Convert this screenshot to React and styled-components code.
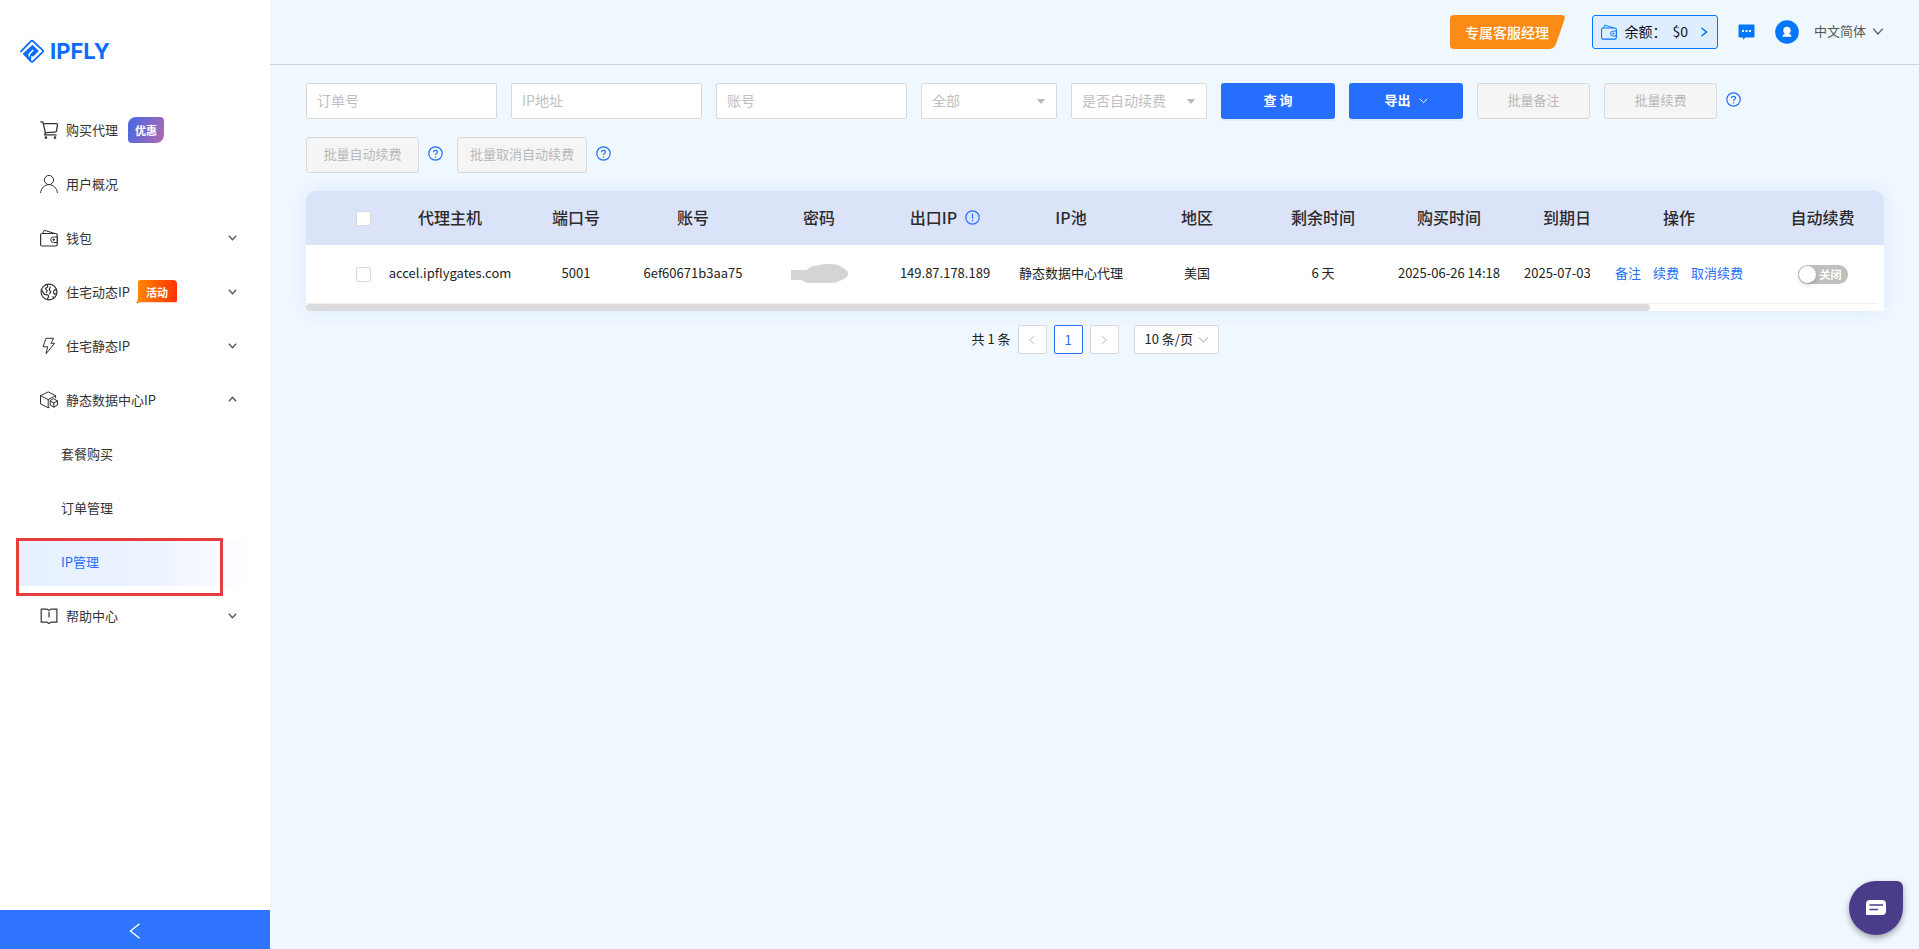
import React, { useLayoutEffect, useRef, useState } from "react";
import styled, { createGlobalStyle, css } from "styled-components";

const BLUE = "#266eff";

const COLUMNS = [
  { title: "代理主机", width: 144, value: "accel.ipflygates.com" },
  { title: "端口号", width: 108, value: "5001" },
  { title: "账号", width: 126, value: "6ef60671b3aa75" },
  { title: "密码", width: 126, value: <MaskedPassword /> },
  { title: "出口IP", width: 126, value: "149.87.178.189", hint: true },
  { title: "IP池", width: 126, value: "静态数据中心代理" },
  { title: "地区", width: 126, value: "美国" },
  { title: "剩余时间", width: 126, value: "6 天" },
  { title: "购买时间", width: 126, value: "2025-06-26 14:18" },
  { title: "到期日期", width: 126, value: "2025-07-03", align: "left" },
];

const MENU = [
  { label: "购买代理", icon: <CartIcon />, badge: "sale" },
  { label: "用户概况", icon: <UserIcon /> },
  { label: "钱包", icon: <WalletIcon />, arrow: "down" },
  { label: "住宅动态IP", icon: <GlobeIcon />, badge: "event", arrow: "down" },
  { label: "住宅静态IP", icon: <BoltIcon />, arrow: "down" },
  { label: "静态数据中心IP", icon: <BoxIcon />, arrow: "up" },
  { label: "套餐购买", sub: true },
  { label: "订单管理", sub: true },
  { label: "IP管理", sub: true, active: true },
  { label: "帮助中心", icon: <BookIcon />, arrow: "down" },
];

const BADGES = { sale: "优惠", event: "活动" };

function LineIcon({ size = 18, children, ...rest }) {
  return (
    <svg
      width={size}
      height={size}
      viewBox="0 0 18 18"
      fill="none"
      stroke="currentColor"
      strokeLinecap="round"
      strokeLinejoin="round"
      aria-hidden="true"
      {...rest}
    >
      {children}
    </svg>
  );
}

function CartIcon() {
  return (
    <LineIcon strokeWidth="1.3">
      <path d="M.8.9h2.1l2.5 10.800 9.600-.6q1.300-.1 1.500-1.200l1-6q.2-1.300-1.100-1.300H4.500" />
      <path d="M5.400 11.700l-.8 2.200h11.500" />
      <circle cx="5.900" cy="16.600" r=".7" fill="currentColor" />
      <circle cx="15" cy="16.600" r=".7" fill="currentColor" />
    </LineIcon>
  );
}

function UserIcon() {
  return (
    <LineIcon>
      <circle cx="9" cy="5" r="4.600" />
      <path d="M.6 17.600C1 13.200 4.600 9.600 9 9.600s8 3.600 8.400 8" />
    </LineIcon>
  );
}

function WalletIcon({ size }) {
  return (
    <LineIcon size={size}>
      <rect x=".6" y="4.500" width="16.600" height="12.500" rx="1.500" strokeWidth="1.200" />
      <path d="M2.800 4.300L4.200 1.300 14 4.200" />
      <path d="M17.200 8h-3.800a2.700 2.700 0 000 5.400h3.800z" />
      <circle cx="13.600" cy="10.700" r=".7" fill="currentColor" />
    </LineIcon>
  );
}

function GlobeIcon() {
  return (
    <LineIcon strokeWidth="1.200">
      <circle cx="9" cy="9" r="7.900" />
      <path d="M7.300 1.500l.5 2.300-2.400 1.700 1.800 2.300-.8 1.600M1.400 6.800l3 4.600 3.500.4.800 1.400-1.400 3.300M10.300 4l-1.100 2.600 1.600 2.200-1.200 2" />
      <path d="M16.500 6.600l-2.300.6-.9 2.100 1.500 2 1.900-.9M14.500 14.500l-1.800-.7" />
    </LineIcon>
  );
}

function BoltIcon() {
  return (
    <LineIcon>
      <path d="M6.400 1.300h7.200l-2.700 5h3.700L6 16.800l1.700-7H3.500z" />
    </LineIcon>
  );
}

function BoxIcon() {
  return (
    <LineIcon>
      <path d="M9.300 16.200l-1.100.5-7.700-3.800V4.700L8.200.9l7.400 3.800v2.200M.5 4.700l7.700 3.900 7.400-3.900M8.200 8.600v8.100" />
      <path d="M13.800 7.900l3.700 2v4.200l-3.700 2-3.600-2V9.900zM10.200 9.900l3.600 2 3.700-2M13.800 11.900v4.200" />
    </LineIcon>
  );
}

function BookIcon() {
  return (
    <LineIcon strokeWidth="1.200">
      <path d="M1.200 2.200H7L9 3.300l2-1.100h5.900v13H11l-2 1.200-2-1.200H1.200zM9 5v5" />
    </LineIcon>
  );
}

function Chevron({ dir = "down", size = 10, weight = 1 }) {
  const paths = {
    down: "M1 3l4 4.500L9 3",
    up: "M1 7l4-4.500L9 7",
    left: "M7.500 1L2.500 5l5 4",
    right: "M2.500 1l5 4-5 4",
  };
  return (
    <svg
      width={size}
      height={size}
      viewBox="0 0 10 10"
      fill="none"
      stroke="currentColor"
      strokeWidth={weight}
      aria-hidden="true"
    >
      <path d={paths[dir]} />
    </svg>
  );
}

function HintIcon({ type = "question" }) {
  return (
    <svg width="15" height="15" viewBox="0 0 15 15" fill="none" stroke={BLUE} aria-hidden="true">
      <circle cx="7.500" cy="7.500" r="6.700" strokeWidth="1.200" />
      {type === "question" ? (
        <path d="M5.500 6.200c0-1.200.9-1.900 2-1.900s2 .7 2 1.800c0 1.300-2 1.500-2 2.900M7.500 10.200v1.200" strokeWidth="1.200" />
      ) : (
        <path d="M7.500 3.800v5M7.500 10v1.200" strokeWidth="1.200" />
      )}
    </svg>
  );
}

function MaskedPassword() {
  return (
    <svg width="57" height="19" viewBox="0 0 57 19" role="img" aria-label="密码">
      <path
        d="M0 6h14c3 0 4-3 8-4 3-.2 5-.5 8-1.500 3-.7 9-.7 15 0 4 .8 7 3.500 9.500 5 3 2 3.300 5.500 1 7.500-3 2.500-7 4-11 5.500-4 .7-22 .8-28 .3-3-.5-4.500-2.800-8-2.800H0z"
        fill="#d4d4d4"
      />
    </svg>
  );
}

function Logo() {
  return (
    <LogoLink href="#">
      <svg width="24" height="24" viewBox="0 0 24 24" fill="none" aria-hidden="true">
        <path
          d="M1 12.400L11 2.200q1-1 2 0l9.600 8.900q1 1 0 2L13 22.400q-1 1-2 0L4 15"
          stroke="#0b6cff"
          strokeWidth="1.800"
          strokeLinecap="round"
        />
        <path d="M3 14.500l9.500-8.800 6.300 6.300-5.800 5.800-1.600-1-.4 5.200z" fill="#0b6cff" />
        <path d="M9.200 17.500v-2.200l4-4.300" stroke="#fff" strokeWidth="1.500" />
      </svg>
      IPFLY
    </LogoLink>
  );
}

function Sidebar() {
  return (
    <Aside>
      <Logo />
      <Menu>
        {MENU.map((item) => (
          <MenuLink href="#" key={item.label} $sub={item.sub} $active={item.active}>
            {item.icon}
            <span>{item.label}</span>
            {item.badge && <Badge $kind={item.badge}>{BADGES[item.badge]}</Badge>}
            {item.arrow && (
              <MenuArrow>
                <Chevron dir={item.arrow} size={9} weight={1.5} />
              </MenuArrow>
            )}
          </MenuLink>
        ))}
      </Menu>
      <Collapse type="button" aria-label="收起">
        <Chevron dir="left" size={18} weight={0.8} />
      </Collapse>
    </Aside>
  );
}

function Header() {
  return (
    <TopBar>
      <ManagerButton type="button">
        <svg viewBox="0 0 115 34" preserveAspectRatio="none" aria-hidden="true">
          <path d="M4 0h107q5 0 3.500 4.500L106 29q-2 5-7 5H4q-4 0-4-4V4q0-4 4-4z" fill="#fc8b16" />
        </svg>
        <span>专属客服经理</span>
      </ManagerButton>
      <Balance type="button">
        <WalletIcon size={16} />
        <span>余额：</span>
        <span>$0</span>
        <Chevron dir="right" size={10} weight={1.6} />
      </Balance>
      <IconButton type="button" aria-label="消息">
        <svg width="17" height="16" viewBox="0 0 16 16" aria-hidden="true">
          <path d="M1 .5h14a1 1 0 011 1v11a1 1 0 01-1 1H7L4.500 15.800V13.500H1a1 1 0 01-1-1v-11a1 1 0 011-1z" fill="#0077ff" />
          <path d="M3.500 6h2v2h-2zM7 6h2v2H7zM10.500 6h2v2h-2z" fill="#fff" />
        </svg>
      </IconButton>
      <IconButton type="button" aria-label="用户">
        <svg width="24" height="24" viewBox="0 0 24 24" aria-hidden="true">
          <circle cx="12" cy="12" r="11.800" fill="#0077ff" />
          <circle cx="12" cy="10.500" r="3.700" fill="#fff" />
          <path d="M7.500 16.800c0-2.300 2-3.300 4.500-3.300s4.500 1 4.500 3.300z" fill="#fff" />
        </svg>
      </IconButton>
      <Language type="button">
        中文简体
        <Chevron size={12} />
      </Language>
    </TopBar>
  );
}

function Filters() {
  return (
    <FilterBar>
      <TextField aria-label="订单号" placeholder="订单号" />
      <TextField aria-label="IP地址" placeholder="IP地址" />
      <TextField aria-label="账号" placeholder="账号" />
      <FilterSelect label="全部" />
      <FilterSelect label="是否自动续费" />
      <PrimaryButton type="button">查 询</PrimaryButton>
      <PrimaryButton type="button">
        导出
        <Chevron size={9} />
      </PrimaryButton>
      <BatchButton type="button" disabled>批量备注</BatchButton>
      <BatchGroup>
        <BatchButton type="button" disabled>批量续费</BatchButton>
        <HintIcon />
      </BatchGroup>
      <BatchGroup>
        <BatchButton type="button" disabled>批量自动续费</BatchButton>
        <HintIcon />
      </BatchGroup>
      <BatchGroup>
        <BatchButton type="button" disabled>批量取消自动续费</BatchButton>
        <HintIcon />
      </BatchGroup>
    </FilterBar>
  );
}

function FilterSelect({ label }) {
  return (
    <SelectWrap>
      <select aria-label={label} defaultValue="">
        <option value="">{label}</option>
      </select>
      <svg width="8" height="5" viewBox="0 0 8 5" aria-hidden="true">
        <path d="M0 0h8L4 5z" fill="#b8b8b8" />
      </svg>
    </SelectWrap>
  );
}

function ProxyTable() {
  const scroller = useRef(null);
  const [thumb, setThumb] = useState({ width: 100, left: 0 });

  const measure = () => {
    const { clientWidth, scrollWidth, scrollLeft } = scroller.current;
    setThumb({ width: (clientWidth / scrollWidth) * 100, left: (scrollLeft / scrollWidth) * 100 });
  };

  useLayoutEffect(() => {
    measure();
    window.addEventListener("resize", measure);
    return () => window.removeEventListener("resize", measure);
  }, []);

  return (
    <TableCard>
      <Scroller ref={scroller} onScroll={measure}>
        <Table>
          <colgroup>
            <Col $width={72} />
            {COLUMNS.map((c) => (
              <Col key={c.title} $width={c.width} />
            ))}
            <col />
            <Col $width={178} />
            <Col $width={109} />
            <Col $width={7} />
          </colgroup>
          <thead>
            <tr>
              <CheckHead>
                <Checkbox type="checkbox" aria-label="全选" />
              </CheckHead>
              {COLUMNS.map((c) => (
                <HeadCell key={c.title}>
                  <HeadLabel>
                    {c.title}
                    {c.hint && <HintIcon type="info" />}
                  </HeadLabel>
                </HeadCell>
              ))}
              <HeadCell />
              <HeadCell $right={116}>操作</HeadCell>
              <HeadCell $right={7}>自动续费</HeadCell>
              <HeadCell $right={0} />
            </tr>
          </thead>
          <tbody>
            <tr>
              <CheckCell>
                <Checkbox type="checkbox" aria-label="选择" />
              </CheckCell>
              {COLUMNS.map((c) => (
                <Cell key={c.title} $align={c.align}>{c.value}</Cell>
              ))}
              <Cell />
              <Cell $right={116}>
                <Actions>
                  <a href="#">备注</a>
                  <a href="#">续费</a>
                  <a href="#">取消续费</a>
                </Actions>
              </Cell>
              <Cell $right={7}>
                <Switch type="button" role="switch" aria-checked="false">
                  <i />
                  关闭
                </Switch>
              </Cell>
              <Gutter />
            </tr>
          </tbody>
        </Table>
      </Scroller>
      <Track>
        <Thumb style={{ width: `${thumb.width}%`, marginLeft: `${thumb.left}%` }} />
      </Track>
    </TableCard>
  );
}

function Pagination() {
  return (
    <Pager>
      <span>共 1 条</span>
      <PageButton type="button" disabled aria-label="上一页">
        <Chevron dir="left" size={10} />
      </PageButton>
      <PageButton type="button" $current>1</PageButton>
      <PageButton type="button" disabled aria-label="下一页">
        <Chevron dir="right" size={10} />
      </PageButton>
      <PageSize>
        <select aria-label="每页条数" defaultValue="10">
          <option value="10">10 条/页</option>
        </select>
        <Chevron size={11} />
      </PageSize>
    </Pager>
  );
}

export default function App() {
  return (
    <>
      <GlobalStyle />
      <Layout>
        <Sidebar />
        <Main>
          <Header />
          <Content>
            <Filters />
            <ProxyTable />
            <Pagination />
          </Content>
        </Main>
        <ChatButton type="button" aria-label="在线客服">
          <svg width="20" height="16" viewBox="0 0 20 16" aria-hidden="true">
            <path d="M4 0h12a4 4 0 014 4v7a4 4 0 01-4 4H0V4a4 4 0 014-4z" fill="#fff" />
            <path d="M3.500 5h13.500M3.500 9.500h8.500" stroke="#4a3c89" strokeWidth="1.500" />
          </svg>
        </ChatButton>
      </Layout>
    </>
  );
}

const GlobalStyle = createGlobalStyle`
  *, *::before, *::after {
    box-sizing: border-box;
  }

  body {
    margin: 0;
    background: #f0f8ff;
    color: #222;
    font-family: "Noto Sans CJK SC", sans-serif;
    font-size: 13px;
    line-height: 20px;
  }

  button, input, select {
    font: inherit;
  }

  button {
    padding: 0;
    border: 0;
    background: none;
    cursor: pointer;
  }

  a {
    color: inherit;
    text-decoration: none;
  }

  svg {
    flex-shrink: 0;
  }
`;

const Layout = styled.div`
  display: flex;
  min-height: 100vh;
`;

const Aside = styled.aside`
  position: sticky;
  top: 0;
  display: flex;
  flex-direction: column;
  flex: 0 0 270px;
  height: 100vh;
  background: #fff;
`;

const LogoLink = styled.a`
  display: flex;
  align-items: center;
  gap: 6px;
  padding: 35px 20px 0;
  color: #0b6cff;
  font-family: Inter, sans-serif;
  font-size: 22px;
  font-weight: 700;
  line-height: 32px;
`;

const Menu = styled.nav`
  display: flex;
  flex-direction: column;
  gap: 7px;
  flex: 1;
  padding: 40px 20px 0 18px;
`;

const MenuLink = styled.a`
  position: relative;
  display: flex;
  align-items: center;
  height: 47px;
  padding: 0 13px 2px 22px;
  color: #333;

  > span {
    margin-left: 8px;
  }

  ${({ $sub }) =>
    $sub &&
    css`
      > span {
        margin-left: 21px;
      }
    `}

  ${({ $active }) =>
    $active &&
    css`
      color: ${BLUE};
      background: linear-gradient(90deg, #e6f0ff, #edf3ff 60%, #fff);

      &::after {
        content: "";
        position: absolute;
        top: -1px;
        left: -2px;
        width: 207px;
        height: 58px;
        border: 3px solid #e63e3e;
      }
    `}
`;

const MenuArrow = styled.i`
  display: flex;
  margin-left: auto;
  color: #555;
`;

const Badge = styled.b`
  margin-left: 10px;
  padding: 0 7px;
  color: #fff;
  font-size: 11px;
  line-height: 26px;
  border-radius: 8px 4px 8px 4px;
  background: linear-gradient(110deg, #4468e0, #b06ab3);

  ${({ $kind }) =>
    $kind === "event" &&
    css`
      margin-left: 6px;
      padding: 0 9px 0 10px;
      line-height: 24px;
      border-radius: 5px 4px 4px 0;
      background: linear-gradient(90deg, #ff8a00, #ff3300);
      clip-path: polygon(2px 0, 100% 0, 100% 95%, 12% 95%, 0 100%, 2px 80%);
    `}
`;

const Collapse = styled.button`
  display: flex;
  align-items: center;
  justify-content: center;
  height: 39px;
  padding-top: 2px;
  color: #fff;
  background: #3075ff;
`;

const Main = styled.main`
  flex: 1;
  min-width: 0;
`;

const TopBar = styled.header`
  display: flex;
  align-items: center;
  justify-content: flex-end;
  height: 65px;
  padding: 0 35px;
  border-bottom: 1px solid #d0d3e2;
`;

const ManagerButton = styled.button`
  display: grid;
  width: 115px;
  height: 34px;
  margin-right: 27px;
  color: #fff;
  font-size: 14px;
  font-weight: 500;

  > * {
    grid-area: 1 / 1;
    width: 100%;
    height: 100%;
  }

  span {
    padding-right: 2px;
    line-height: 34px;
  }
`;

const Balance = styled.button`
  display: flex;
  align-items: center;
  height: 34px;
  margin-right: 20px;
  padding: 0 8px;
  border: 1px solid #0077ff;
  border-radius: 3px;
  background: #deedff;
  color: #0077ff;
  font-size: 14px;

  span {
    padding-bottom: 2px;
    color: #111;
  }

  span:first-of-type {
    margin-left: 7px;
  }

  span:last-of-type {
    margin: 0 11px 0 6px;
  }
`;

const IconButton = styled.button`
  display: flex;
  margin-right: 20px;
`;

const Language = styled.button`
  display: flex;
  align-items: center;
  gap: 6px;
  margin-left: -5px;
  padding-bottom: 2px;
  color: #555;
`;

const Content = styled.div`
  padding: 18px 35px 18px 36px;
`;

const FilterBar = styled.div`
  display: flex;
  flex-wrap: wrap;
  gap: 18px 14px;
`;

const fieldBox = css`
  height: 36px;
  border: 1px solid #d9d9d9;
  border-radius: 2px;
  background: #fff;
`;

const TextField = styled.input`
  ${fieldBox}
  width: 191px;
  padding: 0 10px 2px;
  color: #333;
  font-size: 14px;

  &::placeholder {
    color: #bfbfbf;
  }
`;

const SelectWrap = styled.div`
  ${fieldBox}
  display: grid;
  align-items: center;
  width: 136px;

  > * {
    grid-area: 1 / 1;
  }

  select {
    height: 34px;
    padding: 0 10px 2px;
    border: 0;
    background: none;
    appearance: none;
    color: #bfbfbf;
    font-size: 14px;
  }

  svg {
    justify-self: end;
    margin-right: 11px;
    pointer-events: none;
  }
`;

const PrimaryButton = styled.button`
  display: flex;
  align-items: center;
  justify-content: center;
  gap: 8px;
  width: 114px;
  height: 36px;
  padding-bottom: 2px;
  border-radius: 3px;
  background: ${BLUE};
  box-shadow: 0 2px 0 rgba(0, 0, 0, 0.04);
  color: #fff;
  font-weight: 700;
`;

const BatchButton = styled.button`
  min-width: 113px;
  height: 36px;
  padding: 0 12px 2px;
  border: 1px solid #d9d9d9;
  border-radius: 3px;
  background: #f5f5f5;
  color: #b8b8b8;
  cursor: not-allowed;
`;

const BatchGroup = styled.div`
  display: flex;
  align-items: center;
  gap: 9px;

  svg {
    margin-bottom: 3px;
  }
`;

const TableCard = styled.section`
  margin-top: 18px;
  border-radius: 9px 9px 0 0;
  background: #fff;
  box-shadow: 0 0 20px rgba(38, 110, 255, 0.1);
  overflow: hidden;
`;

const Scroller = styled.div`
  overflow-x: auto;
  scrollbar-width: none;
`;

const Table = styled.table`
  width: 100%;
  min-width: 1853px;
  table-layout: fixed;
  border-collapse: separate;
  border-spacing: 0;
`;

const Col = styled.col`
  width: ${({ $width }) => $width}px;
`;

const pinned = css`
  ${({ $right }) =>
    $right !== undefined &&
    css`
      position: sticky;
      right: ${$right}px;
    `}
`;

const HeadCell = styled.th`
  height: 54px;
  padding: 0 0 2px;
  background: #dbe3f9;
  color: #2b2b2b;
  font-size: 16px;
  font-weight: 500;
  white-space: nowrap;
  ${pinned}
`;

const HeadLabel = styled.span`
  display: flex;
  align-items: center;
  justify-content: center;
  gap: 8px;
`;

const Cell = styled.td`
  height: 59px;
  padding: ${({ $align }) => ($align === "left" ? "0 0 2px 12px" : "0 0 2px")};
  border-bottom: 1px solid #f0f0f0;
  background: #fff;
  text-align: ${({ $align = "center" }) => $align};
  white-space: nowrap;
  ${pinned}

  > svg {
    display: block;
    margin: 0 auto;
  }
`;

const CheckHead = styled(HeadCell)`
  padding: 0 0 0 42px;
`;

const CheckCell = styled(Cell)`
  padding: 0 0 0 42px;
`;

const Gutter = styled.td`
  position: sticky;
  right: 0;
  padding: 0;
  background: #fff;
`;

const Checkbox = styled.input`
  display: block;
  width: 15px;
  height: 15px;
  margin: 0 auto;
  border: 1px solid #d9d9d9;
  border-radius: 2px;
  background: #fff;
  appearance: none;

  &:checked {
    border-color: ${BLUE};
    background: ${BLUE};
  }
`;

const Actions = styled.div`
  display: flex;
  justify-content: center;
  gap: 12px;
  color: ${BLUE};
`;

const Switch = styled.button`
  display: inline-flex;
  align-items: center;
  gap: 4px;
  height: 19px;
  margin-top: 2px;
  padding: 0 6px 0 1px;
  border-radius: 10px;
  background: #bfbfbf;
  color: #fff;
  font-size: 11px;
  font-weight: 700;
  line-height: 19px;
  vertical-align: middle;

  i {
    width: 17px;
    height: 17px;
    border-radius: 50%;
    background: #fff;
    box-shadow: 0 2px 4px rgba(0, 35, 11, 0.2);
  }
`;

const Track = styled.div`
  height: 7px;
`;

const Thumb = styled.div`
  height: 7px;
  border-radius: 4px;
  background: #dcdcdc;
`;

const Pager = styled.div`
  display: flex;
  align-items: center;
  justify-content: center;
  gap: 7px;
  margin-top: 14px;

  > span {
    padding-bottom: 2px;
  }
`;

const PageButton = styled.button`
  display: flex;
  align-items: center;
  justify-content: center;
  width: 29px;
  height: 29px;
  border: 1px solid ${({ $current }) => ($current ? BLUE : "#d9d9d9")};
  border-radius: 2px;
  background: #fff;
  color: ${({ $current }) => ($current ? BLUE : "#bfbfbf")};
`;

const PageSize = styled.div`
  display: grid;
  align-items: center;
  width: 85px;
  height: 29px;
  margin-left: 8px;
  border: 1px solid #d9d9d9;
  border-radius: 2px;
  background: #fff;
  color: #bfbfbf;

  > * {
    grid-area: 1 / 1;
  }

  select {
    height: 27px;
    padding: 0 10px 2px;
    border: 0;
    background: none;
    appearance: none;
    color: #222;
  }

  svg {
    justify-self: end;
    margin-right: 9px;
    pointer-events: none;
  }
`;

const ChatButton = styled.button`
  position: fixed;
  right: 16px;
  bottom: 14px;
  display: flex;
  align-items: center;
  justify-content: center;
  width: 54px;
  height: 54px;
  border-radius: 50% 6px 50% 50%;
  background: #4a3c89;
  box-shadow: 0 3px 6px rgba(0, 0, 0, 0.35);
`;
